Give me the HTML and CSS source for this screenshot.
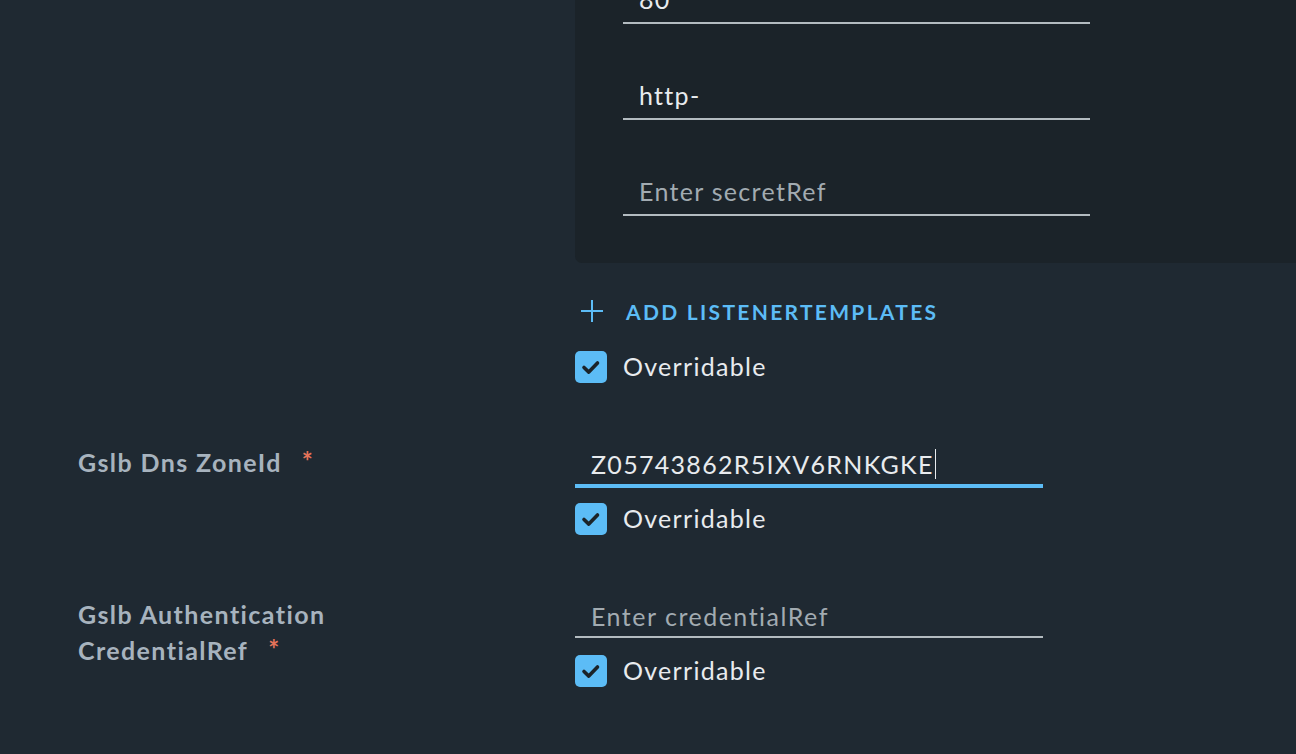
FILE: index.html
```html
<!DOCTYPE html>
<html>
<head>
<meta charset="utf-8">
<link rel="stylesheet" href="styles.css">
</head>
<body>
<div class="form">
  <div class="row">
    <div class="label"></div>
    <div class="control">
      <div class="panel">
        <div class="field"><div class="input value">80</div></div>
        <div class="field"><div class="input value">http-</div></div>
        <div class="field"><div class="input placeholder">Enter secretRef</div></div>
      </div>
      <button class="add-btn">
        <svg class="plus" width="24" height="24" viewBox="0 0 24 24"><path d="M12 1v22M1 12h22" stroke="#5cbcf6" stroke-width="2" fill="none"/></svg>
        <span>ADD LISTENERTEMPLATES</span>
      </button>
      <label class="check">
        <span class="box"><svg width="32" height="32" viewBox="0 0 32 32"><path d="M9 16.5l4.8 4.6L22.5 12" stroke="#1b2329" stroke-width="3.6" fill="none" stroke-linecap="round" stroke-linejoin="round"/></svg></span>
        <span class="check-text">Overridable</span>
      </label>
    </div>
  </div>

  <div class="row">
    <div class="label">Gslb Dns ZoneId<span class="req">*</span></div>
    <div class="control">
      <div class="input2 focused"><span class="value">Z05743862R5IXV6RNKGKE</span><span class="caret"></span></div>
      <label class="check">
        <span class="box"><svg width="32" height="32" viewBox="0 0 32 32"><path d="M9 16.5l4.8 4.6L22.5 12" stroke="#1b2329" stroke-width="3.6" fill="none" stroke-linecap="round" stroke-linejoin="round"/></svg></span>
        <span class="check-text">Overridable</span>
      </label>
    </div>
  </div>

  <div class="row">
    <div class="label">Gslb Authentication<br>CredentialRef<span class="req">*</span></div>
    <div class="control">
      <div class="input2"><span class="placeholder">Enter credentialRef</span></div>
      <label class="check">
        <span class="box"><svg width="32" height="32" viewBox="0 0 32 32"><path d="M9 16.5l4.8 4.6L22.5 12" stroke="#1b2329" stroke-width="3.6" fill="none" stroke-linecap="round" stroke-linejoin="round"/></svg></span>
        <span class="check-text">Overridable</span>
      </label>
    </div>
  </div>
</div>
</body>
</html>
```
FILE: styles.css
```css
html, body {
  margin: 0;
  padding: 0;
  background: #1f2932;
  overflow: hidden;
  height: 754px;
}
body {
  font-family: Lato, "Open Sans", sans-serif;
  color: #e8ebee;
}
.form {
  margin-top: -24px;
  padding-left: 78px;
  display: flex;
  flex-direction: column;
  gap: 61px;
}
.row {
  display: grid;
  grid-template-columns: 497px 1fr;
}
.label {
  font-size: 25px;
  font-weight: 700;
  letter-spacing: 1.4px;
  color: #a7b3be;
  line-height: 36px;
  padding-top: 0;
}
.req {
  color: #e5735a;
  margin-left: 20px;
  font-size: 26px;
  line-height: 0;
  vertical-align: 1px;
}
.control {
  display: flex;
  flex-direction: column;
  align-items: flex-start;
}
.panel {
  align-self: stretch;
  background: #1b2329;
  border-radius: 0 0 0 7px;
  padding: 0 0 47px 48px;
  display: flex;
  flex-direction: column;
  gap: 48px;
}
.field {
  width: 467px;
}
.input {
  height: 46px;
  border-bottom: 2px solid #b3bbc0;
  box-sizing: content-box;
  font-size: 25px;
  letter-spacing: 1.3px;
  line-height: 46px;
  padding-left: 16px;
}
.value { color: #e8ebee; }
.placeholder { color: #a2abb1; }
.add-btn {
  background: none;
  border: 0;
  padding: 0 0 0 5px;
  margin-top: 24px;
  height: 48px;
  display: flex;
  align-items: center;
  gap: 22px;
  font-family: inherit;
  font-size: 21px;
  font-weight: 700;
  letter-spacing: 2.3px;
  color: #5cbcf6;
  cursor: pointer;
}
.check {
  display: flex;
  align-items: center;
  gap: 16px;
  margin-top: 16px;
}
.box {
  width: 32px;
  height: 32px;
  border-radius: 5px;
  background: #5cbcf6;
  display: block;
  flex: none;
}
.box svg { display: block; }
.check-text {
  font-size: 25px;
  letter-spacing: 1.3px;
  color: #e8ebee;
  line-height: 30px;
  padding-bottom: 2px;
}
.input2 {
  width: 452px;
  height: 40px;
  line-height: 40px;
  padding-left: 16px;
  border-bottom: 2px solid #b3bbc0;
  font-size: 25px;
  letter-spacing: 1.3px;
  display: flex;
  align-items: center;
}
.input2 .placeholder {
  letter-spacing: 1.5px;
}
.input2.focused {
  border-bottom-color: #5cbcf6;
  box-shadow: 0 2px 0 #5cbcf6;
}
.input2 + .check {
  margin-top: 17px;
}
.caret {
  display: inline-block;
  width: 1.5px;
  height: 30px;
  background: #e8ebee;
  margin-left: 1px;
}
```
